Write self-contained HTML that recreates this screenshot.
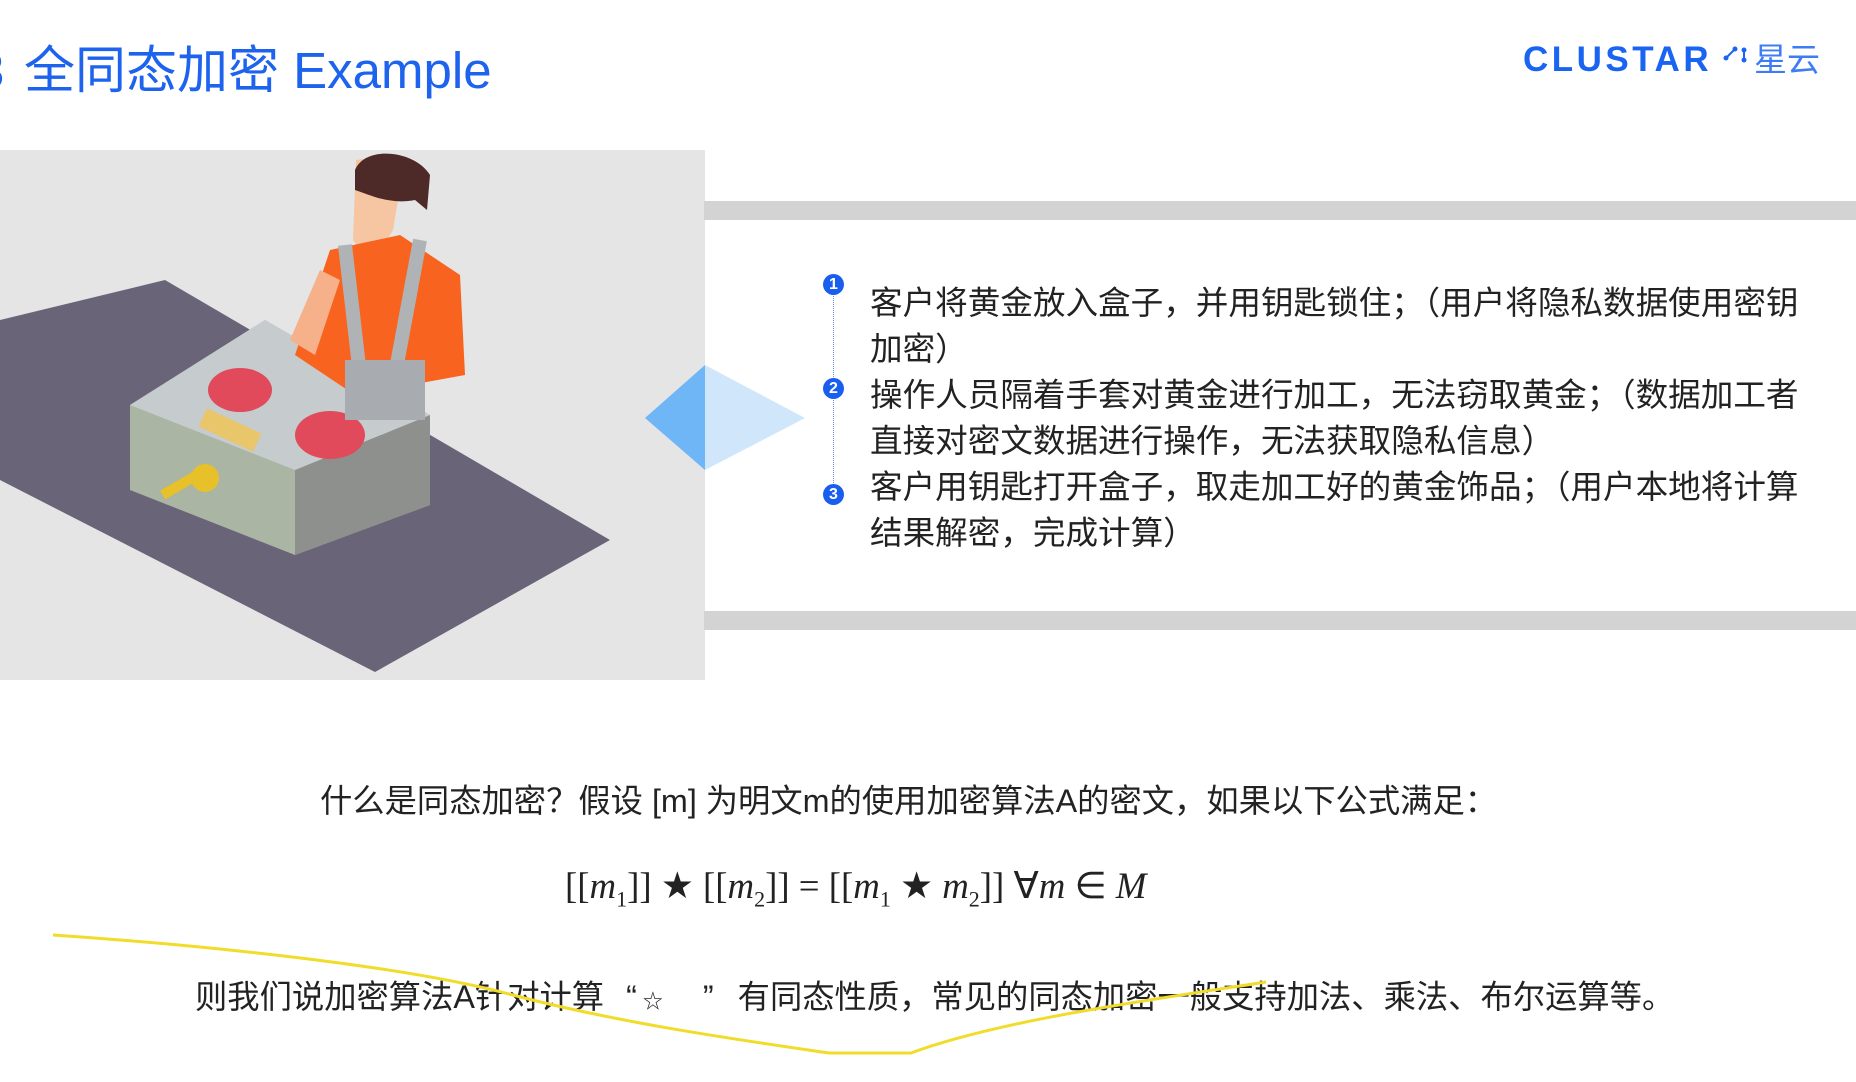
<!DOCTYPE html>
<html><head><meta charset="utf-8"><style>
body{margin:0;width:1856px;height:1082px;background:#fff;position:relative;overflow:hidden;font-family:"Liberation Sans","Noto Sans CJK SC",sans-serif}
.a{position:absolute;white-space:nowrap}
#title{left:24px;top:38px;font-size:51px;color:#1d63ee;line-height:66px}
#logo{left:1523px;top:40px;font-size:35px;font-weight:bold;color:#1a64f2;letter-spacing:3.5px;line-height:40px}
#xy{left:1754px;top:40px;font-size:33px;color:#3d7cf4;line-height:40px}
.bar{position:absolute;left:704px;width:1152px;height:19px;background:#d3d3d3}
.t{position:absolute;left:870px;font-size:32.6px;color:#222;line-height:46px;white-space:nowrap}
.n{position:absolute;left:823px;width:21px;height:21px;border-radius:50%;background:#1a5ef0;color:#fff;font-size:16px;line-height:21px;text-align:center;font-weight:bold}
</style></head><body>
<div class="a" id="title">全同态加密 Example</div>
<div class="a" style="left:-24px;top:38px;font-size:51px;color:#1d63ee;line-height:66px">3</div>
<div class="a" id="logo">CLUSTAR</div>
<svg class="a" style="left:1722px;top:44px" width="26" height="22"><circle cx="4" cy="14" r="2.5" fill="#1a64f2"/><circle cx="13" cy="5" r="2.5" fill="#1a64f2"/><circle cx="22" cy="6" r="2.5" fill="#1a64f2"/><circle cx="22" cy="16" r="2.5" fill="#1a64f2"/><path d="M4 14L13 5M22 6V16" stroke="#1a64f2" stroke-width="2"/></svg>
<div class="a" id="xy">星云</div>

<svg class="a" style="left:0;top:150px" width="705" height="530" viewBox="0 0 705 530">
<rect width="705" height="530" fill="#e5e5e6"/>
<polygon points="0,170 165,130 610,390 375,522 0,330" fill="#6a6479"/>
<polygon points="130,255 265,170 430,265 430,355 295,405 130,340" fill="#aab5a3"/>
<polygon points="295,405 295,320 430,265 430,355" fill="#8d908c"/>
<polygon points="130,255 265,170 430,265 295,320" fill="#c9cdd3" opacity=".9"/>
<ellipse cx="240" cy="240" rx="32" ry="22" fill="#e04a5a"/>
<ellipse cx="330" cy="285" rx="35" ry="24" fill="#e04a5a"/>
<rect x="200" y="270" width="60" height="20" fill="#e9c66a" transform="rotate(25 230 280)"/>
<circle cx="205" cy="328" r="14" fill="#e7c02a"/><rect x="160" y="330" width="45" height="10" fill="#e7c02a" transform="rotate(-30 180 335)"/>
<path d="M356 10c25-5 45 8 42 40l-5 30c-10 20-30 25-40 10z" fill="#f6c5a2"/>
<path d="M355 20c10-25 60-20 75 5l-3 35-12-10c-25 5-45-5-60-10z" fill="#4d2a28"/>
<path d="M330 100l70-15 60 40 5 100-110 20-60-40z" fill="#f86420"/>
<path d="M345 95l15 130M420 90l-25 135" stroke="#b0b3b6" stroke-width="14"/>
<rect x="345" y="210" width="80" height="60" fill="#a8abb0"/>
<path d="M290 190l30-70 20 10-25 75z" fill="#f6b08a"/>
</svg>

<div class="bar" style="top:201px"></div>
<div class="bar" style="top:611px"></div>
<svg class="a" style="left:640px;top:360px" width="170" height="120"><polygon points="5,58 65,5 65,110" fill="#6fb6f6"/><polygon points="65,5 165,58 65,110" fill="#cfe6fb"/></svg>
<div class="a" style="left:833px;top:285px;height:210px;border-left:1px dotted #6b8fe0"></div>
<div class="n" style="top:274px">1</div>
<div class="n" style="top:378px">2</div>
<div class="n" style="top:484px">3</div>
<div class="t" style="top:280px">客户将黄金放入盒子，并用钥匙锁住；（用户将隐私数据使用密钥<br>加密）<br>操作人员隔着手套对黄金进行加工，无法窃取黄金；（数据加工者<br>直接对密文数据进行操作，无法获取隐私信息）<br>客户用钥匙打开盒子，取走加工好的黄金饰品；（用户本地将计算<br>结果解密，完成计算）</div>

<div class="a" style="left:320px;top:776px;font-size:32.3px;color:#222">什么是同态加密？假设 [m] 为明文m的使用加密算法A的密文，如果以下公式满足：</div>
<div class="a" style="left:565px;top:864px;font-size:36.8px;color:#222;font-family:'Liberation Serif',serif">[[<i>m</i><sub style="font-size:22px">1</sub>]] ★ [[<i>m</i><sub style="font-size:22px">2</sub>]] = [[<i>m</i><sub style="font-size:22px">1</sub> ★ <i>m</i><sub style="font-size:22px">2</sub>]] ∀<i>m</i> ∈ <i>M</i></div>
<div class="a" style="left:195px;top:972px;font-size:32.3px;color:#222">则我们说加密算法A针对计算<span style="margin-left:22px">“</span><span style="font-size:20px;margin-left:6px">☆</span><span style="margin-left:40px">”</span><span style="margin-left:24px">有同态性质，常见的同态加密一般支持加法、乘法、布尔运算等。</span></div>
<svg class="a" style="left:0;top:0" width="1856" height="1082"><path d="M53 935C200 945 400 965 509 994S740 1040 829 1053L911 1053C1000 1020 1150 1000 1266 982" fill="none" stroke="#f1dc2a" stroke-width="3"/></svg>
</body></html>
